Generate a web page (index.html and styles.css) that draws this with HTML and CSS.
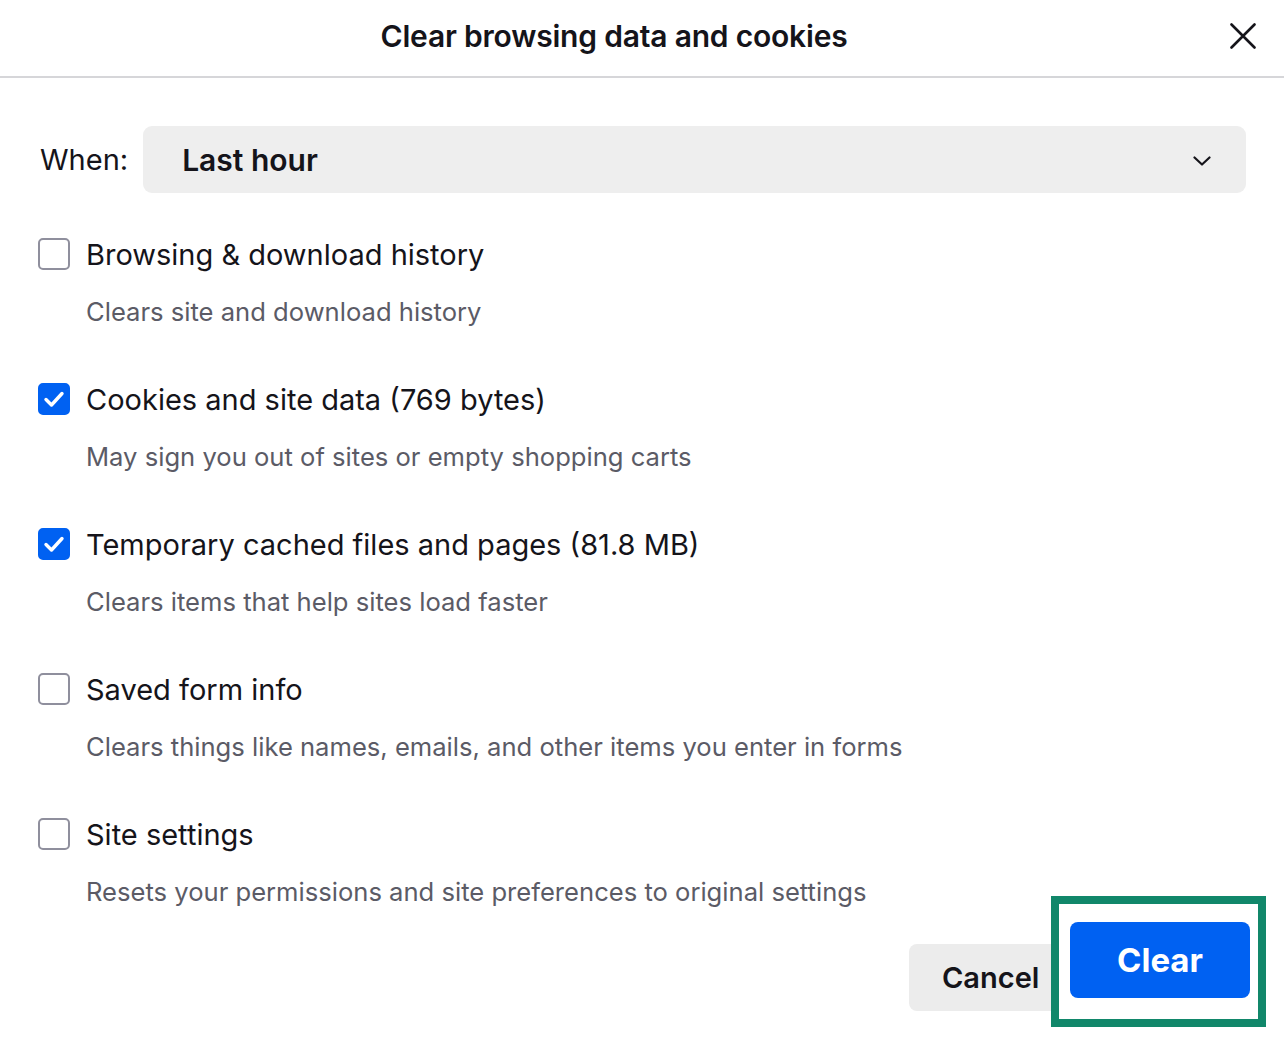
FILE: index.html
```html
<!DOCTYPE html>
<html lang="en">
<head>
<meta charset="utf-8">
<title>Clear browsing data and cookies</title>
<link rel="stylesheet" href="styles.css">
</head>
<body>
<div class="dialog">
  <header class="header">
    <h1 class="title">Clear browsing data and cookies</h1>
    <button class="close" aria-label="Close">
      <svg width="26" height="26" viewBox="0 0 26 26"><path d="M1.5 1.5 L24.5 24.5 M24.5 1.5 L1.5 24.5" stroke="#15141a" stroke-width="2.6" stroke-linecap="round" fill="none"/></svg>
    </button>
  </header>
  <main class="content">
    <div class="when">
      <span class="when-label">When:</span>
      <div class="select">
        <span class="select-value">Last hour</span>
        <svg class="chev" width="18" height="10" viewBox="0 0 18 10"><path d="M1.5 1.5 L9 8.5 L16.5 1.5" stroke="#15141a" stroke-width="2.2" stroke-linecap="round" stroke-linejoin="round" fill="none"/></svg>
      </div>
    </div>
    <div class="options">
      <div class="option">
        <div class="option-row"><span class="box"></span><span class="label">Browsing &amp; download history</span></div>
        <div class="desc">Clears site and download history</div>
      </div>
      <div class="option">
        <div class="option-row"><span class="box checked"><svg width="22" height="18" viewBox="0 0 22 18"><path d="M3 9.5 L8.5 15 L19 3.5" stroke="#fff" stroke-width="3.4" stroke-linecap="round" stroke-linejoin="round" fill="none"/></svg></span><span class="label">Cookies and site data (769 bytes)</span></div>
        <div class="desc">May sign you out of sites or empty shopping carts</div>
      </div>
      <div class="option">
        <div class="option-row"><span class="box checked"><svg width="22" height="18" viewBox="0 0 22 18"><path d="M3 9.5 L8.5 15 L19 3.5" stroke="#fff" stroke-width="3.4" stroke-linecap="round" stroke-linejoin="round" fill="none"/></svg></span><span class="label">Temporary cached files and pages (81.8 MB)</span></div>
        <div class="desc">Clears items that help sites load faster</div>
      </div>
      <div class="option">
        <div class="option-row"><span class="box"></span><span class="label">Saved form info</span></div>
        <div class="desc">Clears things like names, emails, and other items you enter in forms</div>
      </div>
      <div class="option">
        <div class="option-row"><span class="box"></span><span class="label">Site settings</span></div>
        <div class="desc">Resets your permissions and site preferences to original settings</div>
      </div>
    </div>
    <footer class="footer">
      <button class="btn cancel">Cancel</button>
    </footer>
  </main>
  <div class="highlight">
    <button class="btn clear">Clear</button>
  </div>
</div>
</body>
</html>
```
FILE: styles.css
```css
* { box-sizing: border-box; }
html, body { margin: 0; padding: 0; background: #fff; }
body {
  font-family: Inter, "Noto Sans", "Liberation Sans", sans-serif;
  color: #15141a;
  width: 1284px;
  height: 1048px;
  overflow: hidden;
}
.dialog { position: relative; width: 1284px; height: 1048px; }
.header {
  height: 78px;
  border-bottom: 2px solid #d6d6d9;
  display: flex;
  align-items: center;
  justify-content: center;
  position: relative;
}
.title {
  margin: 0 56px 0 0;
  font-size: 30px;
  font-weight: 600;
  letter-spacing: -0.2px;
  padding-bottom: 4px;
}
.close {
  position: absolute;
  right: 28px;
  top: 23px;
  width: 26px;
  height: 26px;
  padding: 0;
  border: 0;
  background: none;
  display: block;
}
.close svg { display: block; }
.content { padding: 48px 38px 0 38px; }
.when { display: flex; align-items: center; gap: 15px; }
.when-label { font-size: 29px; padding-left: 2px; }
.select {
  width: 1103px;
  height: 67px;
  background: #eeeeee;
  border-radius: 9px;
  display: flex;
  align-items: center;
  justify-content: space-between;
  padding: 0 35px 0 39px;
}
.select-value { font-size: 30px; font-weight: 600; }
.chev { display: block; margin-top: 2px; }
.options { padding-top: 44px; }
.option { height: 145px; }
.option-row { display: flex; align-items: center; gap: 16px; height: 36px; }
.box {
  width: 32px;
  height: 32px;
  border: 2px solid #8f8f9d;
  border-radius: 5px;
  flex: none;
  display: flex;
  align-items: center;
  justify-content: center;
  margin-top: -3px;
}
.box.checked { background: #0061f2; border-color: #0061f2; }
.box svg { display: block; }
.label { font-size: 29px; line-height: 36px; }
.desc {
  font-size: 25.6px;
  color: #5b5b66;
  padding-left: 48px;
  margin-top: 23px;
  line-height: 32px;
}
.footer {
  display: flex;
  justify-content: flex-start;
  padding-left: 871px;
  margin-top: -18px;
}
.btn {
  font-family: Inter, "Noto Sans", "Liberation Sans", sans-serif;
  border: 0;
  border-radius: 8px;
  font-weight: 600;
}
.cancel {
  width: 160px;
  height: 67px;
  background: #ececec;
  color: #15141a;
  font-size: 29px;
  text-align: left;
  padding-left: 33px;
}
.highlight {
  position: absolute;
  left: 1051px;
  top: 896px;
  width: 215px;
  height: 131px;
  border: 8px solid #11876a;
  background: #fff;
  padding: 18px 8px 0 11px;
}
.clear {
  width: 180px;
  height: 76px;
  background: #0061f2;
  color: #fff;
  font-size: 33px;
  font-weight: 700;
  display: block;
}
```
